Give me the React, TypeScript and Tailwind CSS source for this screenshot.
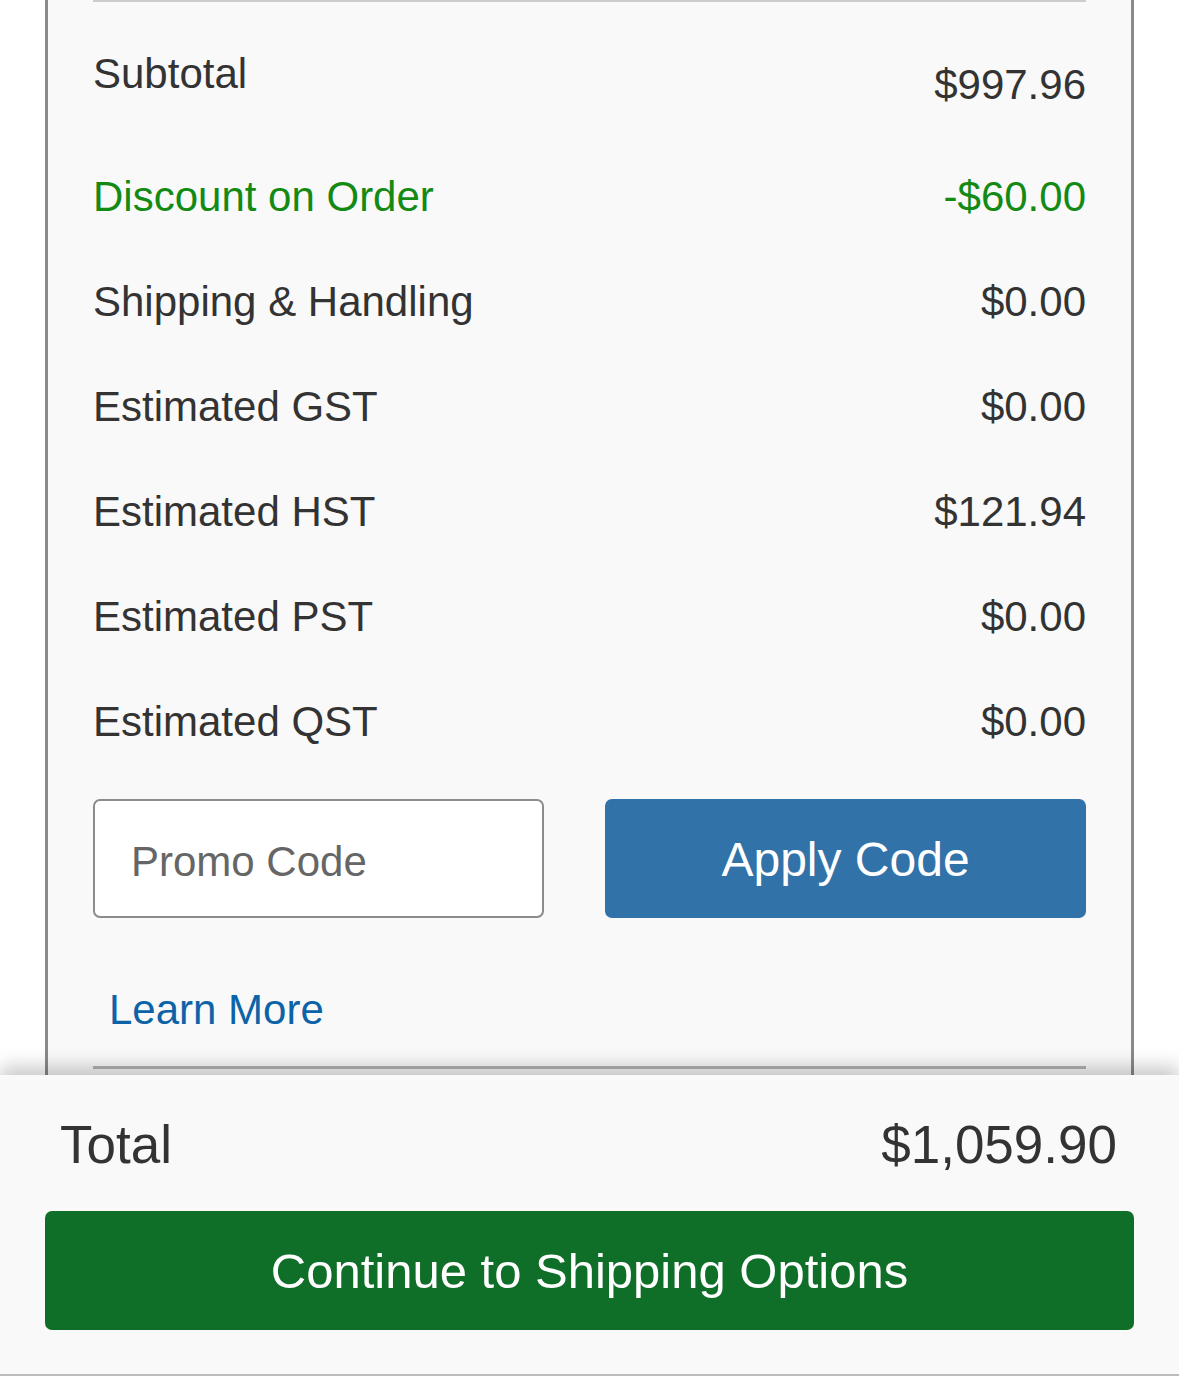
const rows = [
  { label: "Shipping & Handling", value: "$0.00" },
  { label: "Estimated GST", value: "$0.00" },
  { label: "Estimated HST", value: "$121.94" },
  { label: "Estimated PST", value: "$0.00" },
  { label: "Estimated QST", value: "$0.00" },
];

function SummaryRow({ label, value, green = false }: { label: string; value: string; green?: boolean }) {
  return (
    <div
      className={`flex h-[105px] items-center justify-between text-[42px] leading-[48px] ${
        green ? "text-[#138a13]" : "text-[#333333]"
      }`}
    >
      <span>{label}</span>
      <span>{value}</span>
    </div>
  );
}

export default function App() {
  return (
    <div className="flex h-[1376px] w-[1179px] flex-col overflow-hidden bg-white font-['Liberation_Sans',Arial,sans-serif]">
      {/* order summary card */}
      <div className="min-h-0 flex-1 overflow-hidden">
        <div className="ml-[45px] h-full w-[1089px] border-x-[3px] border-[#8a8a8a] bg-[#f9f9f9] px-[45px]">
          <div className="border-t-2 border-[#cccccc]">
            <div className="flex h-[142px] items-start justify-between text-[42px] leading-[48px] text-[#333333]">
              <span className="pt-[48px]">Subtotal</span>
              <span className="pt-[59px]">$997.96</span>
            </div>
            <SummaryRow label="Discount on Order" value="-$60.00" green />
            {rows.map((r) => (
              <SummaryRow key={r.label} label={r.label} value={r.value} />
            ))}

            <div className="mt-[25px] flex gap-[61px]">
              <input
                placeholder="Promo Code"
                className="h-[119px] w-[451px] rounded-[7px] border-2 border-[#8c8c8c] bg-white px-[36px] pt-[6px] text-[42px] text-[#333333] outline-none placeholder:text-[#666666]"
              />
              <button className="h-[119px] flex-1 rounded-[7px] bg-[#3172a9] pt-[3px] text-[48px] text-white">
                Apply Code
              </button>
            </div>

            <div className="mt-[68px] pl-[16px] text-[42px] leading-[48px] text-[#0d63a7]">
              <a>Learn More</a>
            </div>

            <div className="mt-[32px] border-t-[3px] border-[#b3b3b3]" />
          </div>
        </div>
      </div>

      {/* sticky footer */}
      <div className="relative z-10 h-[301px] shrink-0 border-b-2 border-[#bdbdbd] bg-[#f9f9f9] shadow-[0_-8px_18px_rgba(0,0,0,0.22)]">
        <div className="flex items-center justify-between pl-[60px] pr-[62px] pt-[40px] text-[53px] leading-[60px] text-[#333333]">
          <span>Total</span>
          <span>$1,059.90</span>
        </div>
        <div className="mt-[36px] px-[45px]">
          <button className="h-[119px] w-full rounded-[7px] bg-[#0f6e27] pt-[2px] text-[49px] text-white">
            Continue to Shipping Options
          </button>
        </div>
      </div>
    </div>
  );
}
